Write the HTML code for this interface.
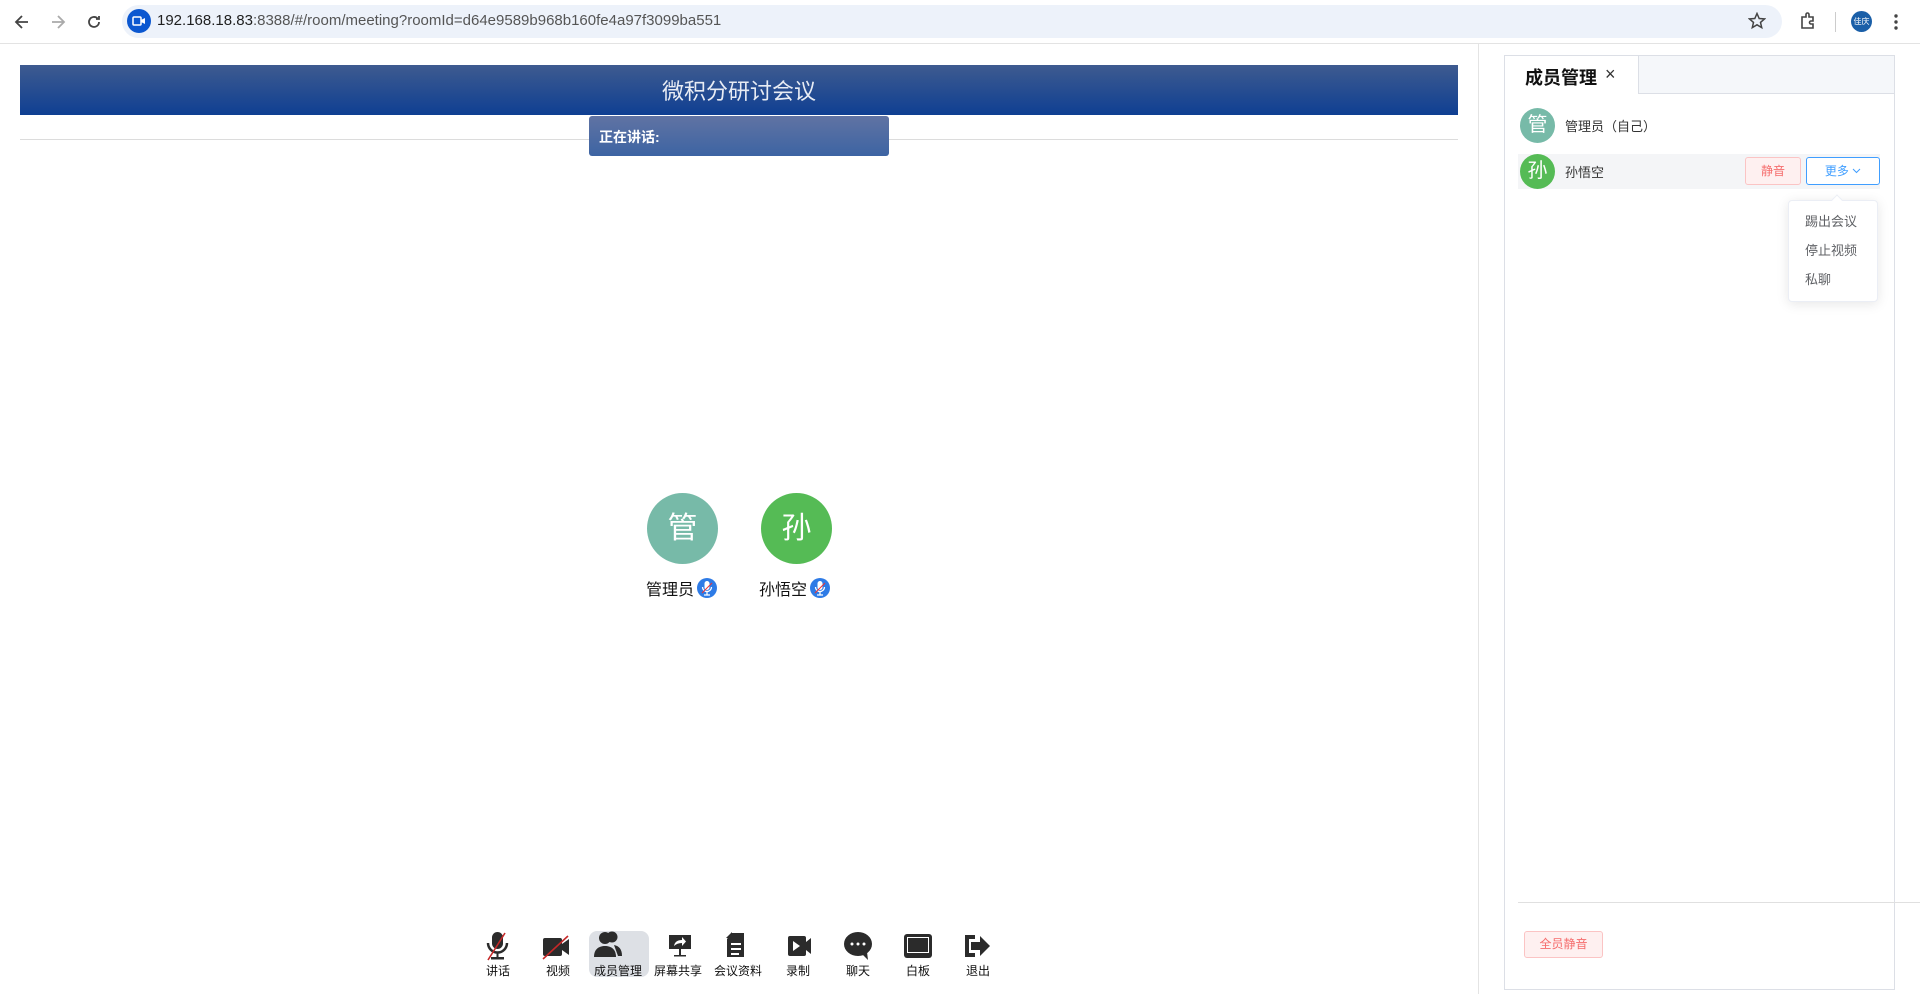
<!DOCTYPE html>
<html><head><meta charset="utf-8"><style>
*{margin:0;padding:0;box-sizing:border-box}
body{width:1920px;height:994px;overflow:hidden;background:#fff;font-family:"Liberation Sans","Noto Sans CJK SC",sans-serif;position:relative}
.a{position:absolute}
.cn{font-family:"Liberation Sans","Noto Sans CJK SC",sans-serif}
</style></head><body>
<div class="a" style="left:0;top:0;width:1920px;height:44px;background:#fff;border-bottom:1px solid #e3e3e3"></div>
<svg class="a" style="left:12px;top:12px" width="20" height="20" viewBox="0 0 20 20"><path d="M16 10H5M10 4L4 10l6 6" stroke="#444" stroke-width="1.8" fill="none"/></svg>
<svg class="a" style="left:48px;top:12px" width="20" height="20" viewBox="0 0 20 20"><path d="M4 10h11M10 4l6 6-6 6" stroke="#aaa" stroke-width="1.8" fill="none"/></svg>
<svg class="a" style="left:84px;top:12px" width="20" height="20" viewBox="0 0 20 20"><path d="M15 10a5 5 0 1 1-1.5-3.6M15 4v3h-3" stroke="#444" stroke-width="1.8" fill="none"/></svg>
<div class="a" style="left:122px;top:5px;width:1660px;height:33px;border-radius:17px;background:#edf2fa"></div>
<div class="a" style="left:127px;top:9px;width:24px;height:24px;border-radius:50%;background:#0b57d0"></div>
<svg class="a" style="left:132px;top:15px" width="14" height="12" viewBox="0 0 14 12"><rect x="1" y="2" width="8" height="8" rx="1" fill="none" stroke="#fff" stroke-width="1.5"/><path d="M9 5l4-2v6l-4-2z" fill="#fff"/></svg>
<div class="a" style="left:157px;top:12px;font-size:15px;color:#1f1f1f">192.168.18.83<span style="color:#555">:8388/#/room/meeting?roomId=d64e9589b968b160fe4a97f3099ba551</span></div>
<svg class="a" style="left:1748px;top:12px" width="18" height="18" viewBox="0 0 18 18"><path d="M9 1.5l2.2 5 5.3.4-4 3.5 1.2 5.2L9 12.8 4.3 15.6l1.2-5.2-4-3.5 5.3-.4z" fill="none" stroke="#444" stroke-width="1.5"/></svg>
<svg class="a" style="left:1798px;top:11px" width="20" height="20" viewBox="0 0 20 20"><path d="M4 6h4V3.5a1.5 1.5 0 0 1 3 0V6h4v4h-2a1.5 1.5 0 0 0 0 3h2v4H4z" fill="none" stroke="#444" stroke-width="1.6"/></svg>
<div class="a" style="left:1835px;top:12px;width:1px;height:20px;background:#ccc"></div>
<div class="a" style="left:1851px;top:11px;width:21px;height:21px;border-radius:50%;background:#1a5fa8;color:#fff;font-size:8px;line-height:21px;text-align:center">佳庆</div>
<svg class="a" style="left:1892px;top:12px" width="8" height="20" viewBox="0 0 8 20"><circle cx="4" cy="4" r="1.7" fill="#444"/><circle cx="4" cy="10" r="1.7" fill="#444"/><circle cx="4" cy="16" r="1.7" fill="#444"/></svg>

<div class="a" style="left:20px;top:65px;width:1438px;height:50px;background:linear-gradient(#3e5b90,#0f3f92)"></div>
<div class="a cn" style="left:20px;top:74px;width:1438px;text-align:center;color:#e8ecf4;font-size:22px">微积分研讨会议</div>
<div class="a" style="left:20px;top:139px;width:1438px;height:1px;background:#dcdcdc"></div>
<div class="a" style="left:589px;top:116px;width:300px;height:40px;border-radius:3px;background:linear-gradient(#6073a3,#3d64a3)"></div>
<div class="a cn" style="left:599px;top:127px;color:#fff;font-size:14px;font-weight:bold">正在讲话:</div>

<div class="a" style="left:647px;top:493px;width:71px;height:71px;border-radius:50%;background:#77baa8;color:#fff;font-size:30px;text-align:center;line-height:71px">管</div>
<div class="a" style="left:761px;top:493px;width:71px;height:71px;border-radius:50%;background:#55bb55;color:#fff;font-size:30px;text-align:center;line-height:71px">孙</div>
<div class="a cn" style="left:646px;top:576px;font-size:16px;color:#111">管理员</div>
<div class="a cn" style="left:759px;top:576px;font-size:16px;color:#111">孙悟空</div>
<svg class="a" style="left:696px;top:577px" width="22" height="22" viewBox="0 0 22 22"><circle cx="11" cy="11" r="10" fill="#2e7be6"/><rect x="8.5" y="4" width="5" height="9" rx="2.5" fill="#fff"/><path d="M6.5 10a4.5 4.5 0 0 0 9 0M11 14.5V18M8 18h6" stroke="#fff" stroke-width="1.3" fill="none"/><path d="M6 16L16 6" stroke="#e33" stroke-width="1"/></svg>
<svg class="a" style="left:809px;top:577px" width="22" height="22" viewBox="0 0 22 22"><circle cx="11" cy="11" r="10" fill="#2e7be6"/><rect x="8.5" y="4" width="5" height="9" rx="2.5" fill="#fff"/><path d="M6.5 10a4.5 4.5 0 0 0 9 0M11 14.5V18M8 18h6" stroke="#fff" stroke-width="1.3" fill="none"/><path d="M6 16L16 6" stroke="#e33" stroke-width="1"/></svg>

<div class="a" style="left:589px;top:931px;width:60px;height:46px;border-radius:8px;background:#dde0e5"></div>
<div class="a cn" style="left:468px;top:962px;width:540px;font-size:12px;color:#111">
<span class="a" style="left:0;width:60px;text-align:center">讲话</span>
<span class="a" style="left:60px;width:60px;text-align:center">视频</span>
<span class="a" style="left:120px;width:60px;text-align:center">成员管理</span>
<span class="a" style="left:180px;width:60px;text-align:center">屏幕共享</span>
<span class="a" style="left:240px;width:60px;text-align:center">会议资料</span>
<span class="a" style="left:300px;width:60px;text-align:center">录制</span>
<span class="a" style="left:360px;width:60px;text-align:center">聊天</span>
<span class="a" style="left:420px;width:60px;text-align:center">白板</span>
<span class="a" style="left:480px;width:60px;text-align:center">退出</span>
</div>
<svg class="a" style="left:468px;top:930px" width="540" height="32" viewBox="0 0 540 32">
<g fill="#2b2b2b">
<rect x="24" y="2" width="11" height="17" rx="5.5"/><path d="M20 13a9.5 9.5 0 0 0 19 0" stroke="#2b2b2b" stroke-width="2.5" fill="none"/><rect x="28.5" y="22" width="2" height="6"/><rect x="23" y="27" width="13" height="2.5"/>
<path d="M20 30L37 3" stroke="#c62828" stroke-width="1.6"/>
<rect x="75" y="8" width="19" height="18" rx="2"/><path d="M94 14l7-5v16l-7-5z"/><path d="M75 29L100 6" stroke="#c62828" stroke-width="1.6"/>
<circle cx="137" cy="8" r="6"/><circle cx="144" cy="7" r="5.5"/><path d="M126 27c0-8 5-11 11-11s11 3 11 11z"/><path d="M146 15c5 1 8 4 8 11h-4"/>
<rect x="201" y="5" width="22" height="14"/><rect x="211" y="19" width="2" height="6"/><rect x="206" y="25" width="12" height="1.5"/><path d="M206 16q1-6 8-6v-3l4 4.5-4 4.5v-3q-5 0-8 3z" fill="#fff"/>
<path d="M264 3h12v24h-17V9z"/><path d="M258 8l6-6v6z"/><rect x="263" y="13" width="10" height="2" fill="#fff"/><rect x="263" y="18" width="10" height="2" fill="#fff"/><rect x="263" y="23" width="8" height="2" fill="#fff"/>
<rect x="320" y="6" width="18" height="20" rx="2"/><path d="M338 12l5-4v16l-5-4z"/><path d="M325 11l7 5-7 5z" fill="#fff"/>
<ellipse cx="390" cy="14" rx="14" ry="12"/><path d="M394 24l6 6-1-8z"/><circle cx="384" cy="14" r="1.5" fill="#fff"/><circle cx="390" cy="14" r="1.5" fill="#fff"/><circle cx="396" cy="14" r="1.5" fill="#fff"/>
<rect x="436" y="4" width="28" height="24" rx="3"/><rect x="439" y="7" width="22" height="16" fill="#fff"/><rect x="440" y="8" width="20" height="14"/>
<path d="M497 5h10v4h-6v14h6v4h-10z"/><path d="M503 12h9V6l10 10-10 10v-6h-9z"/>
</g></svg>

<div class="a" style="left:1478px;top:44px;width:1px;height:950px;background:#e4e4e4"></div>
<div class="a" style="left:1504px;top:55px;width:391px;height:935px;border:1px solid #dcdfe6;background:#fff"></div>
<div class="a" style="left:1638px;top:55px;width:257px;height:39px;background:#f5f7fa;border:1px solid #dcdfe6"></div>
<div class="a cn" style="left:1525px;top:64px;font-size:18px;font-weight:bold;color:#111">成员管理</div>
<div class="a" style="left:1605px;top:64px;font-size:18px;color:#333">×</div>
<div class="a" style="left:1520px;top:108px;width:35px;height:35px;border-radius:50%;background:#77baa8;color:#fff;font-size:20px;text-align:center;line-height:35px">管</div>
<div class="a cn" style="left:1565px;top:116px;font-size:13px;color:#333">管理员（自己）</div>
<div class="a" style="left:1518px;top:154px;width:362px;height:35px;background:#f4f5f7"></div>
<div class="a" style="left:1520px;top:154px;width:35px;height:35px;border-radius:50%;background:#55bb55;color:#fff;font-size:20px;text-align:center;line-height:35px">孙</div>
<div class="a cn" style="left:1565px;top:162px;font-size:13px;color:#333">孙悟空</div>
<div class="a cn" style="left:1745px;top:157px;width:56px;height:28px;border:1px solid #fbc4c4;background:#fef0f0;color:#f56c6c;font-size:12px;text-align:center;line-height:26px;border-radius:3px">静音</div>
<div class="a cn" style="left:1806px;top:157px;width:74px;height:28px;border:1px solid #409eff;background:#fff;color:#409eff;font-size:12px;text-align:center;line-height:26px;border-radius:3px">更多 <svg width="9" height="6" viewBox="0 0 9 6" style="vertical-align:1px"><path d="M1 1l3.5 3.5L8 1" stroke="#409eff" fill="none"/></svg></div>
<div class="a" style="left:1788px;top:200px;width:90px;height:102px;background:#fff;border:1px solid #ebeef5;border-radius:4px;box-shadow:0 2px 12px rgba(0,0,0,.1)"></div>
<div class="a" style="left:1833px;top:196px;width:8px;height:8px;background:#fff;transform:rotate(45deg);border-left:1px solid #ebeef5;border-top:1px solid #ebeef5"></div>
<div class="a cn" style="left:1805px;top:207px;font-size:13px;color:#606266;line-height:29px">踢出会议<br>停止视频<br>私聊</div>
<div class="a" style="left:1518px;top:902px;width:402px;height:1px;background:#e0e0e0"></div>
<div class="a cn" style="left:1524px;top:931px;width:79px;height:27px;border:1px solid #fbc4c4;background:#fef0f0;color:#f56c6c;font-size:12px;text-align:center;line-height:25px;border-radius:3px">全员静音</div>
</body></html>
